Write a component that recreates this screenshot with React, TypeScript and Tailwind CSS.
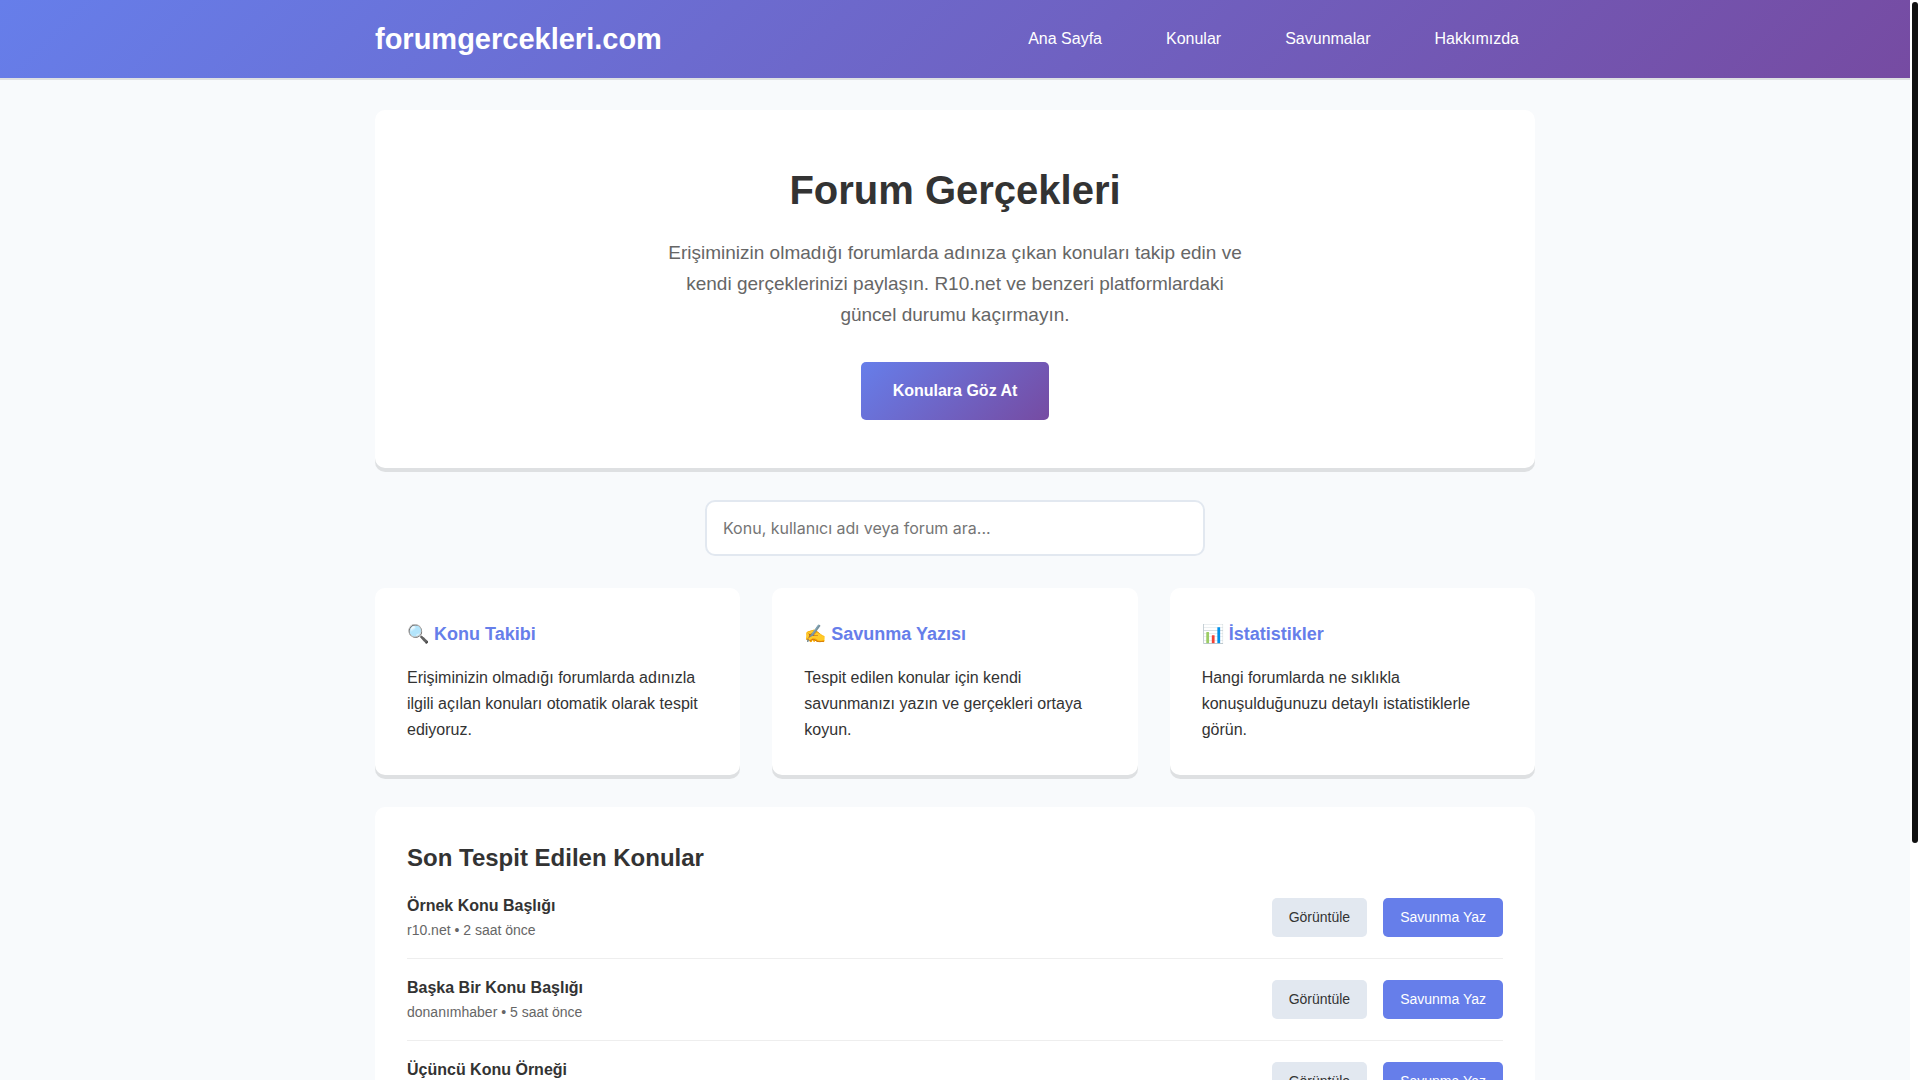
const navLinks = ['Ana Sayfa', 'Konular', 'Savunmalar', 'Hakkımızda'];

const features = [
  {
    title: '🔍 Konu Takibi',
    text: 'Erişiminizin olmadığı forumlarda adınızla ilgili açılan konuları otomatik olarak tespit ediyoruz.',
  },
  {
    title: '✍️ Savunma Yazısı',
    text: 'Tespit edilen konular için kendi savunmanızı yazın ve gerçekleri ortaya koyun.',
  },
  {
    title: '📊 İstatistikler',
    text: 'Hangi forumlarda ne sıklıkla konuşulduğunuzu detaylı istatistiklerle görün.',
  },
];

const topics = [
  { title: 'Örnek Konu Başlığı', meta: 'r10.net • 2 saat önce' },
  { title: 'Başka Bir Konu Başlığı', meta: 'donanımhaber • 5 saat önce' },
  { title: 'Üçüncü Konu Örneği', meta: 'r10.net • 1 gün önce' },
];

function Header() {
  return (
    <header className="bg-[linear-gradient(135deg,#667eea_0%,#764ba2_100%)] py-4 text-white shadow-[0_2px_0_rgba(0,0,0,0.1)]">
      <div className="mx-auto flex max-w-[1200px] items-center justify-between px-5">
        <div className="text-[29px] leading-[46px] font-bold">forumgercekleri.com</div>
        <nav className="flex gap-8">
          {navLinks.map((label) => (
            <a key={label} href="#" className="px-4 text-base leading-[26px]">
              {label}
            </a>
          ))}
        </nav>
      </div>
    </header>
  );
}

function Hero() {
  return (
    <section className="rounded-[10px] bg-white p-12 text-center shadow-[0_4px_0_rgba(0,0,0,0.1)]">
      <h1 className="mb-[15px] text-[40px] leading-[64px] font-bold">Forum Gerçekleri</h1>
      <p className="mx-auto mb-8 max-w-[590px] text-[19px] leading-[31px] text-[#666]">
        Erişiminizin olmadığı forumlarda adınıza çıkan konuları takip edin ve kendi gerçeklerinizi
        paylaşın. R10.net ve benzeri platformlardaki güncel durumu kaçırmayın.
      </p>
      <a
        href="#konular"
        className="mx-auto block w-fit rounded-[5px] bg-[linear-gradient(135deg,#667eea_0%,#764ba2_100%)] px-8 py-4 text-base leading-[26px] font-bold text-white"
      >
        Konulara Göz At
      </a>
    </section>
  );
}

function Features() {
  return (
    <section className="grid gap-8 md:grid-cols-3">
      {features.map((f) => (
        <article
          key={f.title}
          className="rounded-[10px] bg-white p-8 shadow-[0_4px_0_rgba(0,0,0,0.1)]"
        >
          <h3 className="mb-4 text-lg leading-[29px] font-bold text-[#667eea]">{f.title}</h3>
          <p className="text-base leading-[26px]">{f.text}</p>
        </article>
      ))}
    </section>
  );
}

function TopicList() {
  return (
    <section id="konular" className="rounded-[10px] bg-white p-8 shadow-[0_4px_0_rgba(0,0,0,0.1)]">
      <h2 className="text-2xl leading-[38px] font-bold">Son Tespit Edilen Konular</h2>
      <ul>
        {topics.map((t) => (
          <li
            key={t.title}
            className="flex items-center justify-between border-b border-[#eee] py-4 last:border-b-0"
          >
            <div>
              <h4 className="text-base leading-[26px] font-bold">{t.title}</h4>
              <p className="text-sm leading-[23px] text-[#666]">{t.meta}</p>
            </div>
            <div className="flex gap-4">
              <button
                type="button"
                className="rounded-[5px] bg-[#e2e8f0] px-[17px] py-2 text-sm leading-[23px]"
              >
                Görüntüle
              </button>
              <button
                type="button"
                className="rounded-[5px] bg-[#667eea] px-[17px] py-2 text-sm leading-[23px] text-white"
              >
                Savunma Yaz
              </button>
            </div>
          </li>
        ))}
      </ul>
    </section>
  );
}

export default function App() {
  return (
    <div className="flex h-screen overflow-hidden bg-white font-['Liberation_Sans',Arial,sans-serif] text-[#333]">
      <div className="min-w-0 flex-1 overflow-y-auto bg-[#f8fafc] [scrollbar-width:none]">
        <Header />
        <main className="mx-auto flex max-w-[1200px] flex-col gap-8 px-5 py-8">
          <Hero />
          <input
            type="search"
            aria-label="Konu, kullanıcı adı veya forum ara"
            placeholder="Konu, kullanıcı adı veya forum ara..."
            className="mx-auto w-full max-w-[500px] rounded-[10px] border-2 border-[#e2e8f0] bg-white p-4 font-['Inter',sans-serif] text-base leading-5 placeholder:text-[#757575]"
          />
          <Features />
          <TopicList />
        </main>
      </div>
      <div aria-hidden="true" className="w-[10px] shrink-0 p-0.5">
        <div className="h-[78.2%] rounded-full bg-[#111]" />
      </div>
    </div>
  );
}
